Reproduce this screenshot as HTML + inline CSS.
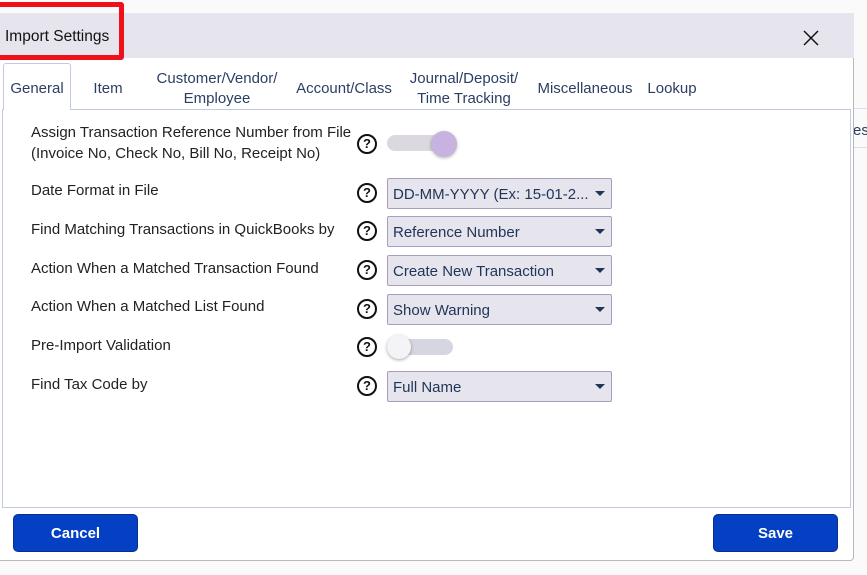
<!DOCTYPE html>
<html><head><style>
*{box-sizing:border-box;margin:0;padding:0}
body{width:867px;height:575px;background:#fafafa;font-family:"Liberation Sans",sans-serif;position:relative;overflow:hidden;color:#222}
.abs{position:absolute}
.dlg{left:0;top:13px;width:854px;height:548px;background:#fff;border:1px solid #b8b8b8;border-left:none;border-radius:0 0 4px 0}
.title{left:0;top:13px;width:854px;height:45px;background:#e6e4ec}
.tab{position:absolute;color:#2b3f63;font-size:15px;text-align:center;line-height:20px}
.lbl{position:absolute;left:31px;font-size:15px;color:#222;line-height:21px}
.q{position:absolute;left:357px;width:20px;height:20px;border:2px solid #111;border-radius:50%;font-size:13px;font-weight:bold;text-align:center;line-height:16px;color:#111}
.dd{position:absolute;left:387px;width:225px;height:31px;background:#e6e4ec;border:1px solid #a89cc0;border-radius:2px;font-size:15px;color:#1f3557;padding-left:5px;line-height:31px}
.dd:after{content:"";position:absolute;right:6px;top:12px;border-left:5px solid transparent;border-right:5px solid transparent;border-top:5px solid #1f3557}
.btn{position:absolute;top:514px;width:125px;height:38px;background:#0340c4;border:1px solid #0a2f8a;border-radius:5px;color:#fff;font-weight:bold;font-size:15px;text-align:center;line-height:38px}
</style></head><body>
<div class="abs" style="left:853px;top:108px;width:14px;height:40px;border-top:1px solid #dde;border-bottom:1px solid #dde;color:#2b3f63;font-size:15px;line-height:44px">es</div>
<div class="abs dlg"></div>
<div class="abs title"></div>
<div class="abs" style="left:5px;top:28px;font-size:15.5px;color:#111">Import Settings</div>
<div class="abs" style="left:-6px;top:2px;width:130px;height:58px;border:5px solid #f0101a;border-radius:3px"></div>
<svg class="abs" style="left:803px;top:30px" width="16" height="16"><path d="M1 1L15 15M15 1L1 15" stroke="#111" stroke-width="1.5"/></svg>
<div class="abs" style="left:3px;top:63px;width:68px;height:47px;border:1px solid #c0cbe0;border-bottom:none;background:#fff;border-radius:3px 3px 0 0;z-index:2"></div>
<div class="abs" style="left:2px;top:109px;width:849px;height:399px;border:1px solid #c0cbe0"></div>
<div class="tab" style="left:3px;top:79px;width:68px;z-index:3">General</div>
<div class="tab" style="left:88px;top:79px;width:40px">Item</div>
<div class="tab" style="left:150px;top:69px;width:134px">Customer/Vendor/<br>Employee</div>
<div class="tab" style="left:292px;top:79px;width:104px">Account/Class</div>
<div class="tab" style="left:402px;top:69px;width:124px">Journal/Deposit/<br>Time Tracking</div>
<div class="tab" style="left:533px;top:79px;width:104px">Miscellaneous</div>
<div class="tab" style="left:645px;top:79px;width:54px">Lookup</div>

<div class="lbl" style="top:122px">Assign Transaction Reference Number from File<br>(Invoice No, Check No, Bill No, Receipt No)</div>
<div class="q" style="top:134px">?</div>
<div class="abs" style="left:387px;top:135px;width:66px;height:16px;background:#dcd8e0;border-radius:8px"></div>
<div class="abs" style="left:431px;top:131px;width:26px;height:26px;background:#c8b2e0;border-radius:50%;box-shadow:0 1px 3px rgba(0,0,0,.3)"></div>

<div class="lbl" style="top:180px">Date Format in File</div>
<div class="q" style="top:183px">?</div>
<div class="dd" style="top:178px">DD-MM-YYYY (Ex: 15-01-2...</div>

<div class="lbl" style="top:219px">Find Matching Transactions in QuickBooks by</div>
<div class="q" style="top:221px">?</div>
<div class="dd" style="top:216px">Reference Number</div>

<div class="lbl" style="top:258px">Action When a Matched Transaction Found</div>
<div class="q" style="top:260px">?</div>
<div class="dd" style="top:255px">Create New Transaction</div>

<div class="lbl" style="top:296px">Action When a Matched List Found</div>
<div class="q" style="top:299px">?</div>
<div class="dd" style="top:294px">Show Warning</div>

<div class="lbl" style="top:335px">Pre-Import Validation</div>
<div class="q" style="top:337px">?</div>
<div class="abs" style="left:387px;top:339px;width:66px;height:16px;background:#d6d6e2;border-radius:8px"></div>
<div class="abs" style="left:387px;top:335px;width:24px;height:24px;background:#f4f4f6;border-radius:50%;box-shadow:0 1px 3px rgba(0,0,0,.35)"></div>

<div class="lbl" style="top:374px">Find Tax Code by</div>
<div class="q" style="top:376px">?</div>
<div class="dd" style="top:371px">Full Name</div>

<div class="btn" style="left:13px">Cancel</div>
<div class="btn" style="left:713px">Save</div>
</body></html>
